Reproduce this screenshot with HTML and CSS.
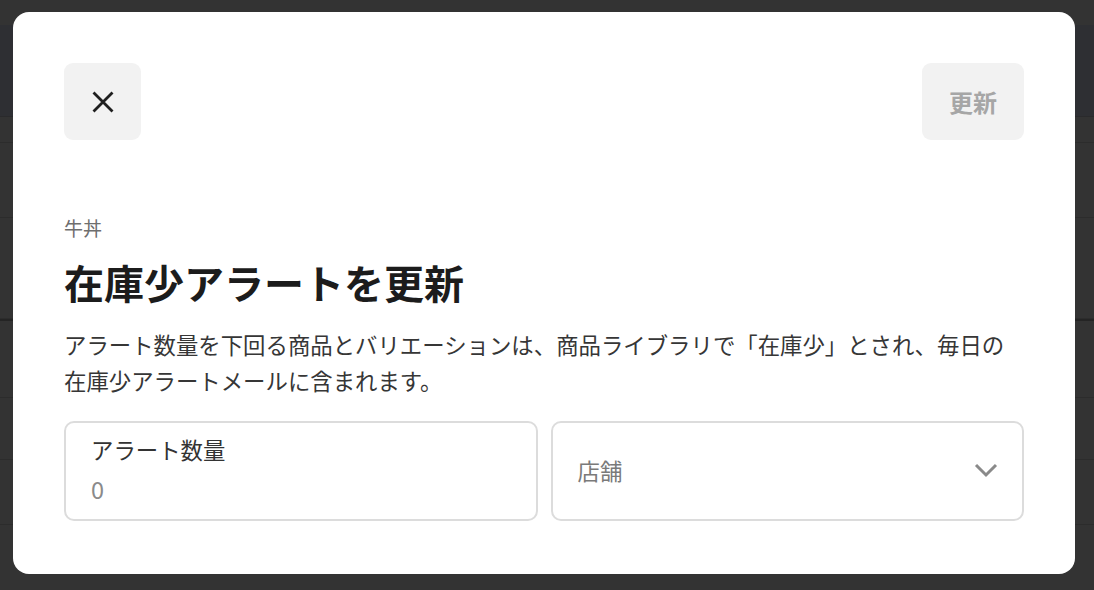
FILE: index.html
```html
<!DOCTYPE html>
<html lang="ja">
<head>
<meta charset="utf-8">
<title>在庫少アラートを更新</title>
<link rel="stylesheet" href="styles.css">
</head>
<body>
<div class="backdrop">
  <div class="bg-top"></div>
  <div class="bg-header"></div>
  <div class="bg-row r1"></div>
  <div class="bg-row r2"></div>
  <div class="bg-row r3"></div>
  <div class="bg-row r4 strong"></div>
  <div class="bg-row r5"></div>
  <div class="bg-row r6"></div>
  <div class="bg-row r7"></div>
</div>
<div class="modal">
  <div class="modal-head">
    <button class="btn-close" aria-label="閉じる">
      <svg width="24" height="24" viewBox="0 0 24 24"><path d="M2.5 2.5 L21.5 21.5 M21.5 2.5 L2.5 21.5" stroke="#1f1f1f" stroke-width="2.8" fill="none"/></svg>
    </button>
    <button class="btn-update">更新</button>
  </div>
  <div class="eyebrow">牛丼</div>
  <h1 class="title">在庫少アラートを更新</h1>
  <p class="desc">アラート数量を下回る商品とバリエーションは、商品ライブラリで「在庫少」とされ、毎日の在庫少アラートメールに含まれます。</p>
  <div class="fields">
    <div class="field">
      <div class="field-label">アラート数量</div>
      <div class="field-value">0</div>
    </div>
    <div class="field select">
      <div class="field-placeholder">店舗</div>
      <svg class="chevron" width="24" height="16" viewBox="0 0 24 16"><path d="M2 3 L12 13 L22 3" stroke="#8a8a8a" stroke-width="3" fill="none"/></svg>
    </div>
  </div>
</div>
</body>
</html>
```
FILE: styles.css
```css
* { box-sizing: border-box; }
html, body {
  margin: 0;
  padding: 0;
  width: 1094px;
  height: 590px;
  overflow: hidden;
  background: #333333;
  font-family: "Noto Sans CJK JP", "Noto Sans", sans-serif;
}
.backdrop {
  display: flex;
  flex-direction: column;
  height: 590px;
}
.bg-top { height: 25px; background: #333333; }
.bg-header { height: 92px; background: #2e2f33; border-bottom: 1px solid #2a2a2c; }
.bg-row { border-bottom: 1px solid #2c2c2c; background: #333333; }
.bg-row.r1 { height: 26px; }
.bg-row.r2 { height: 75px; }
.bg-row.r3 { height: 101px; }
.bg-row.r4 { height: 0; border-bottom: 2px solid #242424; }
.bg-row.r5 { height: 77px; }
.bg-row.r6 { height: 62px; }
.bg-row.r7 { height: 65px; }

.modal {
  position: fixed;
  left: 13px;
  top: 12px;
  width: 1062px;
  height: 562px;
  background: #ffffff;
  border-radius: 16px;
  padding: 51px 51px 53px 51px;
  display: flex;
  flex-direction: column;
}
.modal-head {
  display: flex;
  justify-content: space-between;
  height: 77px;
}
.btn-close, .btn-update {
  border: none;
  background: #f2f2f2;
  border-radius: 9px;
  height: 77px;
  padding: 0;
  margin: 0;
  display: flex;
  align-items: center;
  justify-content: center;
  font-family: inherit;
}
.btn-close { width: 77px; }
.btn-update {
  width: 102px;
  font-size: 24px;
  font-weight: 700;
  color: #a6a6a6;
}
.eyebrow {
  margin-top: 75px;
  font-size: 19px;
  line-height: 26px;
  color: #6e6e6e;
}
.title {
  margin: 15px 0 0 0;
  font-size: 40px;
  line-height: 52px;
  font-weight: 700;
  color: #1c1c1c;
}
.desc {
  margin: 18px 0 0 0;
  font-size: 22.4px;
  line-height: 36px;
  color: #363636;
}
.fields {
  margin-top: 23px;
  display: grid;
  grid-template-columns: 1fr 1fr;
  gap: 13px;
}
.field {
  height: 100px;
  border: 2px solid #dcdcdc;
  border-radius: 10px;
  padding: 6px 25px 10px 25px;
  font-size: 22.4px;
  line-height: 40px;
}
.field-label { color: #333333; }
.field-value { color: #8a8a8a; font-size: 23.5px; }
.field.select {
  display: flex;
  align-items: center;
  justify-content: space-between;
  padding: 0 24px 2px 25px;
}
.field-placeholder { color: #7a7a7a; }
.chevron { display: block; }
```
